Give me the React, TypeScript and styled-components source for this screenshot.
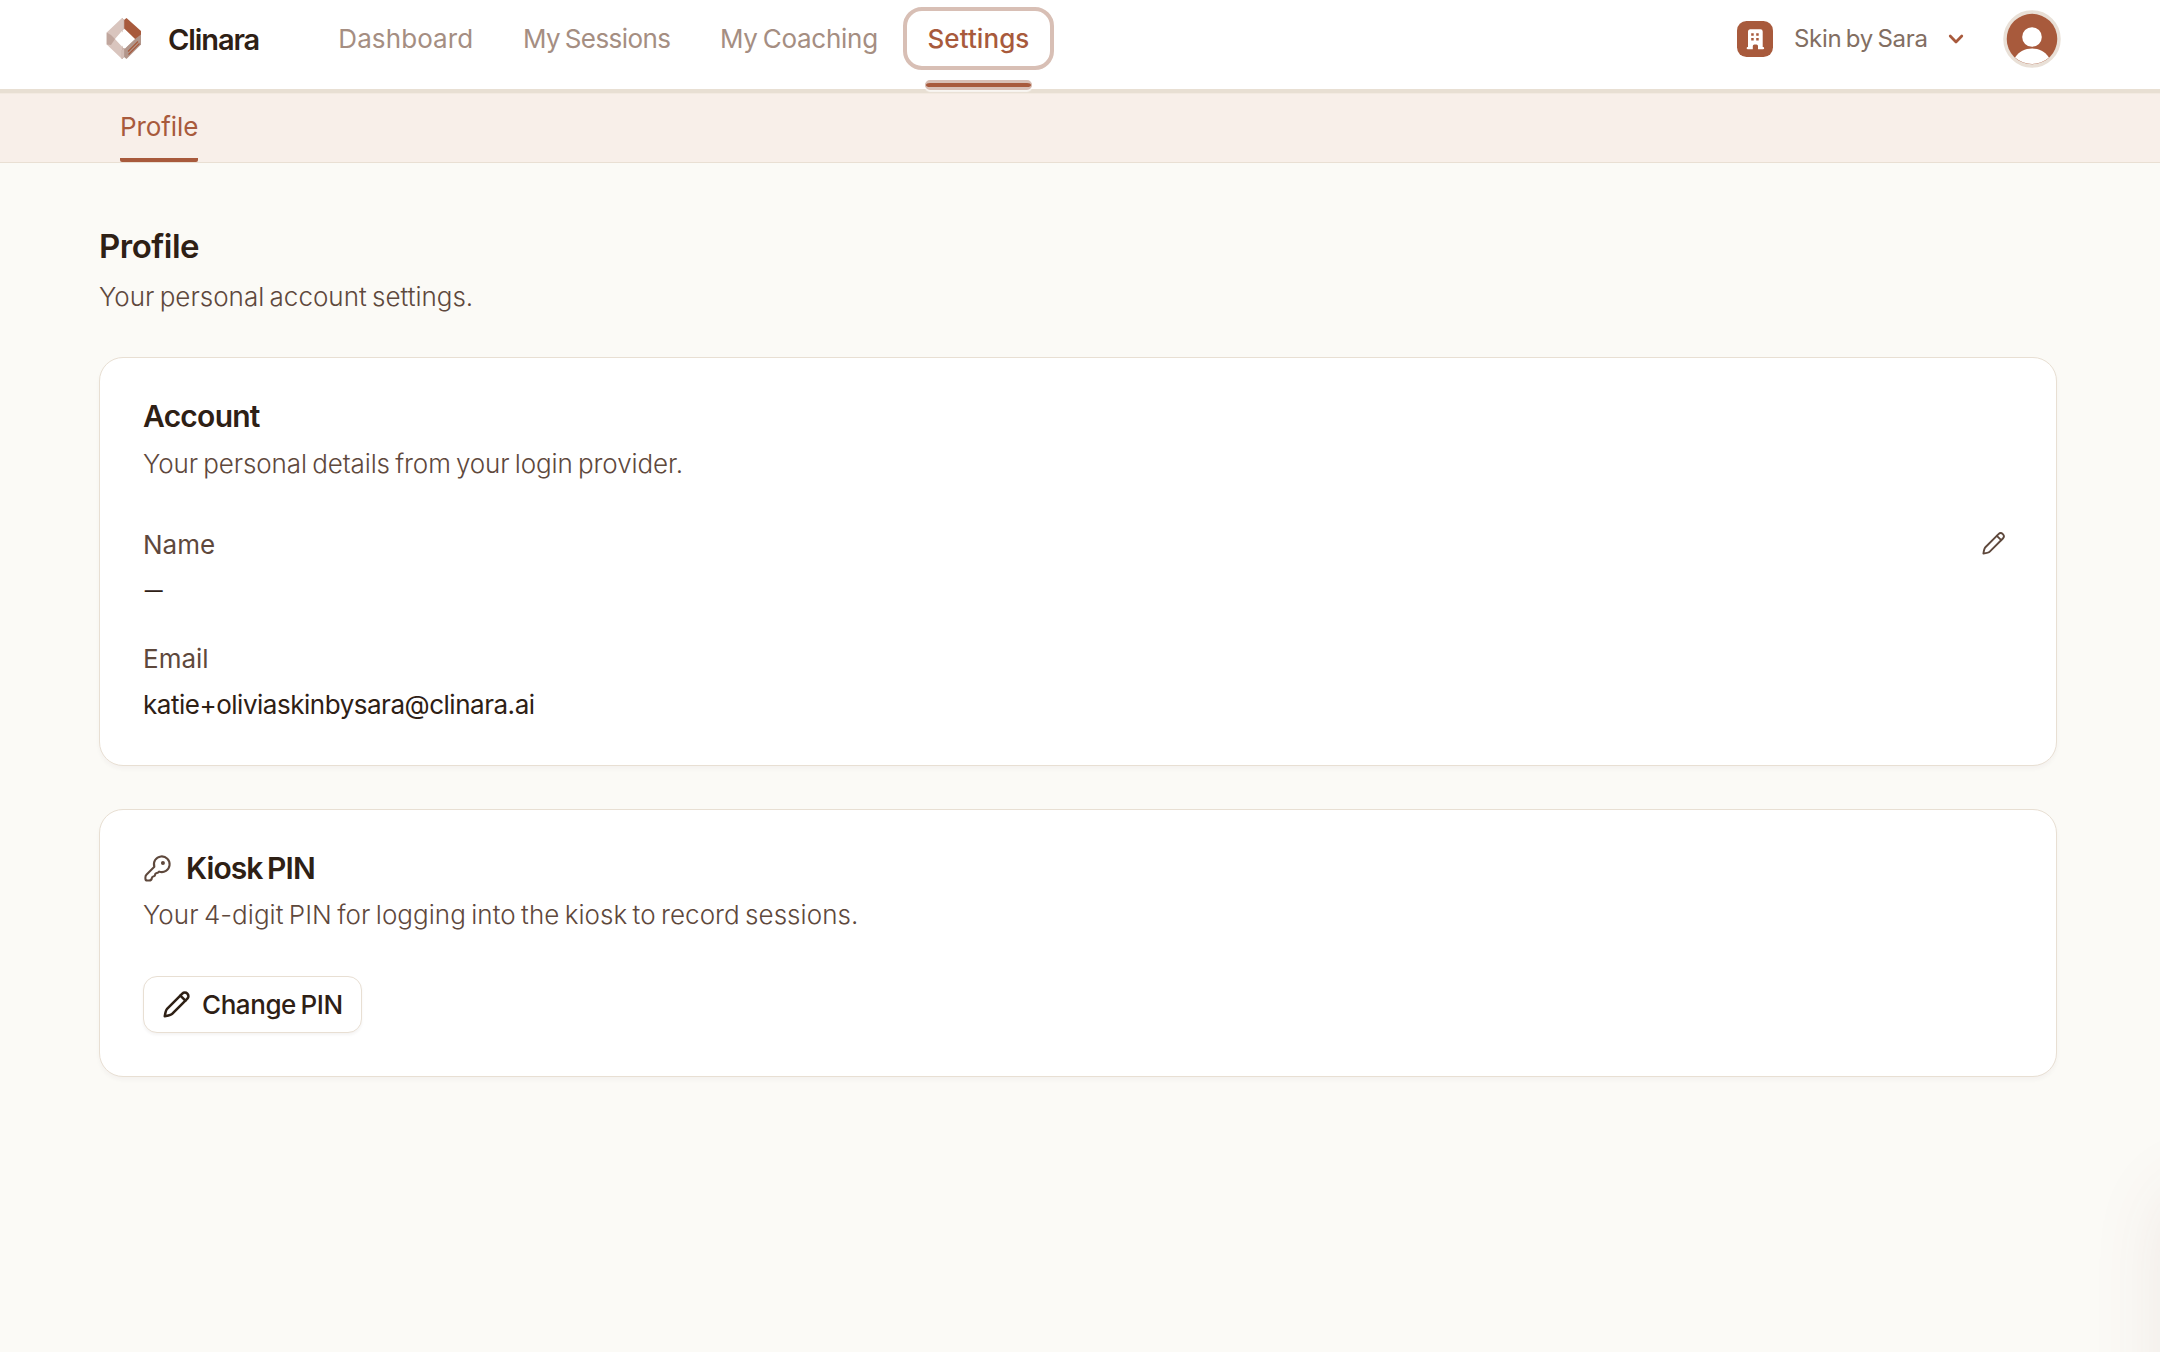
import React from 'react';
import styled, { createGlobalStyle } from 'styled-components';

const color = {
  brand: '#a85a3c',
  ink: '#2e2015',
  body: '#5e483c',
  muted: '#a58e82',
  line: '#e8dfd3',
  ring: '#d8bfb5',
  page: '#fbfaf6',
};

const Global = createGlobalStyle`
  * { box-sizing: border-box; }
  body { margin: 0; background: ${color.page}; }
  h1, h2, p, dl, dt, dd { margin: 0; font-weight: inherit; }
  svg { display: block; flex: none; }
`;

const Page = styled.div`
  position: relative;
  height: 1352px;
  overflow: hidden;
  background: ${color.page};
  color: ${color.body};
  font: 400 26px/34px Inter, 'Liberation Sans', sans-serif;
  word-spacing: -2px;
`;

const Header = styled.header`
  display: flex;
  align-items: center;
  height: 93px;
  padding: 0 99px 12px 106px;
  background: #fff;
  border-bottom: 4px solid ${color.line};
`;

const Brand = styled.a`
  display: flex;
  align-items: center;
  gap: 26px;
  width: 208px;
  color: ${color.ink};
`;

const BrandName = styled.span`
  font-size: 29px;
  font-weight: 600;
  letter-spacing: -1.1px;
  padding-top: 2px;
`;

const Nav = styled.nav`
  display: flex;
  gap: 1px;
`;

const NavItem = styled.a<{ $active?: boolean; $track: number }>`
  position: relative;
  display: flex;
  align-items: center;
  height: 63px;
  padding: 0 20.3px;
  white-space: nowrap;
  border: 4px solid ${(p) => (p.$active ? color.ring : 'transparent')};
  border-radius: 19px;
  color: ${(p) => (p.$active ? color.brand : color.muted)};
  font-weight: ${(p) => (p.$active ? 500 : 400)};
  letter-spacing: ${(p) => p.$track}px;
`;

const ActiveMark = styled.span`
  position: absolute;
  left: 18px;
  right: 18px;
  top: 69px;
  height: 10px;
  border: solid ${color.ring};
  border-width: 3px 1px;
  border-radius: 6px;
  background: ${color.brand};
  box-shadow: 0 2px 1px rgba(255, 255, 255, 0.7);
`;

const Tools = styled.div`
  display: flex;
  align-items: center;
  margin-left: auto;
`;

const OrgName = styled.span`
  margin-left: 21px;
  width: 154px;
  font-size: 24px;
  letter-spacing: -0.29px;
  color: #826e62;
`;

const AvatarIcon = styled.svg`
  margin-left: 39px;
`;

const SubNav = styled.nav`
  display: flex;
  height: 70px;
  padding-left: 120px;
  background: #f8efe9;
  border-top: 1px solid #f3eae1;
  border-bottom: 1px solid #e9dfd3;
`;

const SubTab = styled.a`
  width: 78px;
  padding-top: 16px;
  color: ${color.brand};
  letter-spacing: -0.1px;
  border-bottom: 4px solid ${color.brand};
  border-radius: 2px;
`;

const Main = styled.main`
  padding: 63px 103px 0 99px;
`;

const Title = styled.h1`
  font-size: 33px;
  line-height: 40px;
  font-weight: 600;
  letter-spacing: -0.5px;
  color: ${color.ink};
`;

const Text = styled.p<{ $track: number; $top: number }>`
  margin-top: ${(p) => p.$top}px;
  font-weight: 300;
  letter-spacing: ${(p) => p.$track}px;
`;

const Card = styled.section`
  margin-top: 43px;
  padding: 38px 43px 43px;
  background: #fff;
  border: 1px solid ${color.line};
  border-radius: 24px;
  box-shadow: 0 3px 4px rgba(60, 40, 50, 0.035);
`;

const CardTitle = styled.h2<{ $track: number }>`
  display: flex;
  align-items: center;
  gap: 14px;
  font-size: 30px;
  line-height: 40px;
  font-weight: 600;
  letter-spacing: ${(p) => p.$track}px;
  color: ${color.ink};
`;

const Fields = styled.dl`
  display: grid;
  gap: 34px;
  margin-top: 47px;
`;

const Field = styled.div`
  display: grid;
  gap: 12px;
`;

const Label = styled.dt`
  display: flex;
  align-items: center;
  justify-content: space-between;
  height: 34px;
  padding-right: 7px;
`;

const EditIcon = styled.span`
  margin-top: -3px;
`;

const Value = styled.dd`
  color: ${color.ink};
  letter-spacing: -0.48px;
`;

const EmptyValue = styled(Value)`
  height: 34px;
  margin-top: -2px;
  margin-bottom: 2px;
  font-family: Lato, sans-serif;
  font-size: 27px;
`;

const Button = styled.button`
  display: flex;
  align-items: center;
  gap: 11px;
  width: 219px;
  height: 57px;
  margin-top: 44px;
  padding: 0 0 0 18px;
  font: inherit;
  font-weight: 500;
  letter-spacing: -0.42px;
  word-spacing: -2px;
  white-space: nowrap;
  color: ${color.ink};
  background: #fff;
  border: 1px solid ${color.line};
  border-radius: 14px;
  box-shadow: 0 2px 3px rgba(60, 40, 30, 0.05);
`;

const EdgeGlow = styled.div`
  position: absolute;
  left: 2164px;
  top: 1190px;
  width: 400px;
  height: 500px;
  border-radius: 30px;
  box-shadow: 0 0 76px rgba(130, 70, 70, 0.1);
`;

const Logo = () => (
  <svg width="36" height="42" viewBox="0 0 36 42">
    <path d="M16 0l2 2v8.5L9 21l9 9.7V39l-2 2L.7 26.5V14.5z" fill="#d9c5be" />
    <path d="M.7 14.5L5 17l4 4-4 6-4.3-.5z" fill="#c0a69d" />
    <path d="M18 2l2.5-2L35 13v13l-6-5-11-10.5z" fill={color.brand} />
    <path d="M29 21l6-4.5v10L20.5 41 18 39v-8.3z" fill="#b2968b" />
    <path d="M22 33.5l10-10M22.5 36.5l11-11" stroke={color.brand} strokeWidth="1.2" />
    <path d="M16 0l2 2v8.5l-1.6 1.8V31l1.6-.3V39l-2 2v-9l2-2" fill="none" stroke="#c4aaa1" strokeWidth=".6" />
    <path d="M19 11.5L28.6 21 19 30.6 9.6 21z" fill="#fff" />
  </svg>
);

const Building = () => (
  <svg width="36" height="36" viewBox="0 0 36 36">
    <rect width="36" height="36" rx="9.5" fill={color.brand} />
    <path
      fill="#fff"
      fillRule="evenodd"
      d="M13 8.3h10.5a2.2 2.2 0 0 1 2.2 2.2V26h.3a1.1 1.1 0 0 1 0 2.3h-5V25a1.5 1.5 0 0 0-1.5-1.5h-2.2a1.5 1.5 0 0 0-1.5 1.5v3.3h-5a1.1 1.1 0 0 1 0-2.3h.2V10.5a2.2 2.2 0 0 1 2-2.2zM14.2 12.3v2.5h2.5v-2.5zM19.2 12.3v2.5h2.5v-2.5zM14.2 17.1v2.5h2.5v-2.5zM19.2 17.1v2.5h2.5v-2.5z"
    />
  </svg>
);

const Chevron = () => (
  <svg width="16" height="12" viewBox="0 0 16 12">
    <path d="M2.2 3L8 9l5.8-6" fill="none" stroke={color.brand} strokeWidth="2.7" strokeLinecap="round" strokeLinejoin="round" />
  </svg>
);

const Avatar = () => (
  <AvatarIcon width="58" height="58" viewBox="0 0 58 58">
    <circle cx="29" cy="29" r="27" fill="#fff" stroke="#e9e0d7" strokeWidth="3.5" />
    <circle cx="29" cy="29" r="25.3" fill={color.brand} />
    <circle cx="29" cy="27" r="9.8" fill="#fff" />
    <path d="M12 47.5C16 41.5 22 38.5 29 38.5S42 41.5 46 47.5A25.3 25.3 0 0 1 12 47.5z" fill="#fff" />
  </AvatarIcon>
);

const Pencil = ({ size, stroke, width }: { size: number; stroke: string; width: number }) => (
  <svg width={size} height={size} viewBox="0 0 24 24" fill="none" stroke={stroke} strokeWidth={width} strokeLinecap="round" strokeLinejoin="round">
    <path d="M16.8 3A2.97 2.97 0 0 1 21 7.2L8.4 19.8C7.2 21 5.8 21.2 2.3 21.7 2.8 18.2 3 16.8 4.2 15.6z" />
    <path d="M15.2 4.6l4.2 4.2" />
  </svg>
);

const KeyIcon = () => (
  <svg width="29" height="29" viewBox="0 0 24 24" fill="none" stroke={color.body} strokeWidth="1.7" strokeLinecap="round" strokeLinejoin="round">
    <path d="M9.4 10.6L3 17c-.7.7-1 1.3-1 2.2v1.3c0 1 .6 1.5 1.6 1.5H5c1.6 0 2.2-.6 2.3-2 .1-1.2.7-1.4 1.7-1.6 1.2-.2.9-.8 1.1-1.8.3-1.2 1.5-.7 2.5-1.4l.8-.6a6.5 6.5 0 1 0-4-4z" />
    <circle cx="16.5" cy="7.5" r=".8" fill={color.body} />
  </svg>
);

export default function App() {
  return (
    <Page>
      <Global />
      <Header>
        <Brand>
          <Logo />
          <BrandName>Clinara</BrandName>
        </Brand>
        <Nav>
          <NavItem $track={0.1}>Dashboard</NavItem>
          <NavItem $track={-0.58}>My Sessions</NavItem>
          <NavItem $track={-0.26}>My Coaching</NavItem>
          <NavItem $active $track={0.08}>
            Settings
            <ActiveMark />
          </NavItem>
        </Nav>
        <Tools>
          <Building />
          <OrgName>Skin by Sara</OrgName>
          <Chevron />
          <Avatar />
        </Tools>
      </Header>
      <SubNav>
        <SubTab>Profile</SubTab>
      </SubNav>
      <Main>
        <Title>Profile</Title>
        <Text $top={14} $track={0}>Your personal account settings.</Text>
        <Card>
          <CardTitle $track={-0.74}>Account</CardTitle>
          <Text $top={11} $track={-0.1}>Your personal details from your login provider.</Text>
          <Fields>
            <Field>
              <Label>
                Name
                <EditIcon>
                  <Pencil size={25} stroke={color.body} width={1.8} />
                </EditIcon>
              </Label>
              <EmptyValue>—</EmptyValue>
            </Field>
            <Field>
              <Label>Email</Label>
              <Value>katie+oliviaskinbysara@clinara.ai</Value>
            </Field>
          </Fields>
        </Card>
        <Card>
          <CardTitle $track={-0.92}>
            <KeyIcon />
            Kiosk PIN
          </CardTitle>
          <Text $top={10} $track={0.04}>Your 4-digit PIN for logging into the kiosk to record sessions.</Text>
          <Button>
            <Pencil size={29} stroke={color.ink} width={2.1} />
            Change PIN
          </Button>
        </Card>
      </Main>
      <EdgeGlow />
    </Page>
  );
}
